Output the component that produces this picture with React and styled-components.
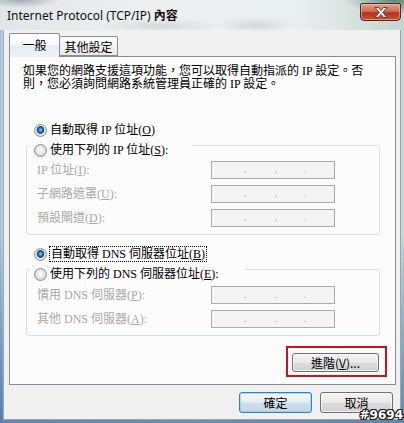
import React from 'react';
import styled, { createGlobalStyle } from 'styled-components';

const GlobalStyle = createGlobalStyle`
  html, body {
    margin: 0;
    padding: 0;
    background: #f0f0f0;
  }
  body {
    font-family: "Liberation Serif", "Noto Sans CJK TC", serif;
    font-size: 12px;
    color: #000;
  }
`;

const Window = styled.div`
  position: relative;
  width: 404px;
  height: 423px;
  display: flex;
  flex-direction: column;
  overflow: hidden;
  background:
    linear-gradient(180deg, rgba(255,255,255,0) 0, rgba(255,255,255,0) 55%, rgba(40,90,150,0.65) 100%),
    linear-gradient(90deg, #9fb8cc 0, #cbd9e4 3px, #e4e9ec 50%, #c9d6d2 100%);
`;

const TitleBar = styled.div`
  height: 30px;
  display: flex;
  align-items: flex-start;
  padding-left: 7px;
  background:
    radial-gradient(ellipse 40px 8px at 20px 0px, rgba(90,100,105,0.45), rgba(90,100,105,0) 100%),
    radial-gradient(ellipse 60px 8px at 160px 26px, rgba(140,150,155,0.25), rgba(140,150,155,0) 100%),
    radial-gradient(ellipse 40px 8px at 255px 25px, rgba(140,150,155,0.25), rgba(140,150,155,0) 100%),
    radial-gradient(ellipse 50px 14px at 395px 0px, rgba(60,110,95,0.75), rgba(60,110,95,0) 100%),
    linear-gradient(90deg, #e2e6e8 0, #edf0f1 40%, #e9eeee 75%, #c4d6cf 100%);
`;

const Title = styled.div`
  margin-top: 7px;
  font-family: "Noto Sans", "Noto Sans CJK TC", sans-serif;
  font-size: 12px;
  line-height: 16px;
  white-space: nowrap;
  color: #111;
`;

const TitleStrong = styled.b`
  font-family: "Noto Sans CJK TC", sans-serif;
`;

const CloseButton = styled.div`
  margin-left: auto;
  margin-top: 3px;
  margin-right: 3px;
  width: 41px;
  height: 18px;
  box-sizing: border-box;
  border: 1px solid #5b2418;
  border-radius: 2px 2px 4px 4px;
  display: flex;
  align-items: center;
  justify-content: center;
  background: linear-gradient(180deg, #e3a191 0, #cf6d57 45%, #b5321c 55%, #c9523a 100%);
  box-shadow: inset 0 0 0 1px rgba(255,220,210,0.45);
`;

const Client = styled.div`
  flex: 1;
  margin: 0 3px 3px 3px;
  border: 1px solid #97a6b1;
  border-top: none;
  background: #f0f0f0;
  display: flex;
  flex-direction: column;
`;

const TabRow = styled.div`
  margin-top: 3px;
  margin-left: 5px;
  height: 23px;
  display: flex;
  align-items: flex-end;
`;

const Tab = styled.div`
  box-sizing: border-box;
  width: ${p => p.$width}px;
  height: ${p => (p.$active ? 24 : 20)}px;
  margin-bottom: ${p => (p.$active ? -1 : 0)}px;
  position: relative;
  z-index: ${p => (p.$active ? 2 : 1)};
  border: 1px solid #898c95;
  border-bottom: ${p => (p.$active ? 'none' : '1px solid #898c95')};
  border-left: ${p => (p.$active ? '1px solid #898c95' : 'none')};
  border-radius: 2px 2px 0 0;
  background: ${p =>
    p.$active
      ? 'linear-gradient(180deg, #fdfdfd 0, #f7f9fb 45%, #e4ebf2 55%, #eef2f6 100%)'
      : 'linear-gradient(180deg, #fbfbfb 0, #f3f3f3 50%, #e8e8e8 100%)'};
  display: flex;
  justify-content: center;
  padding-top: ${p => (p.$active ? 3 : 2)}px;
  font-family: "Noto Sans CJK TC", sans-serif;
  font-size: 12px;
  line-height: 16px;
`;

const Panel = styled.div`
  box-sizing: border-box;
  margin-left: 5px;
  width: 387px;
  height: 329px;
  border: 1px solid #898c95;
  background: #fcfcfc;
  padding: 8px 0 0 13px;
  display: flex;
  flex-direction: column;
  align-items: flex-start;
`;

const Description = styled.div`
  line-height: 13px;
  white-space: nowrap;
`;

const RadioRow = styled.div`
  height: 16px;
  display: flex;
  align-items: center;
  gap: 3px;
  margin-top: ${p => p.$top || 0}px;
  margin-left: ${p => p.$left || 0}px;
  white-space: nowrap;
  line-height: 14px;
`;

const RadioCircle = styled.span`
  width: 13px;
  height: 13px;
  flex: none;
  box-sizing: border-box;
  border-radius: 50%;
  border: 1px solid #8e8f8f;
  background: ${p =>
    p.$checked
      ? 'radial-gradient(circle at 50% 45%, #9fd6f7 0, #3b8bcb 1.5px, #135596 3px, #1d4f80 3.6px, #f6f6f6 4.2px, #e6e6e6 5px, #d2d2d2 6px)'
      : 'radial-gradient(circle at 50% 45%, #ffffff 0, #eeeeee 3px, #d9d9d9 5px, #cfcfcf 6px)'};
`;

const FocusText = styled.span`
  outline: 1px dotted #000;
  outline-offset: 0;
  padding: 0 1px;
`;

const GroupBox = styled.div`
  box-sizing: border-box;
  width: 354px;
  margin-top: 7px;
  margin-left: 3px;
  border: 1px solid #d5dfe5;
  border-radius: 3px;
  padding: 0 0 7px 3px;
  display: flex;
  flex-direction: column;
  align-items: flex-start;
`;

const GroupHeader = styled.div`
  width: ${p => p.$width}px;
  height: 16px;
  margin-top: -4px;
  padding-left: 4px;
  box-sizing: border-box;
  background: #fcfcfc;
  display: flex;
  align-items: center;
  gap: 3px;
  white-space: nowrap;
  line-height: 14px;
`;

const FieldGrid = styled.div`
  margin-top: ${p => p.$top}px;
  padding-left: 7px;
  display: grid;
  grid-template-columns: 174px 124px;
  row-gap: 6px;
  align-items: center;
`;

const FieldLabel = styled.span`
  color: #a9a9a9;
  white-space: nowrap;
  line-height: 14px;
`;

const IpField = styled.div`
  box-sizing: border-box;
  width: 124px;
  height: 18px;
  border: 1px solid #ababab;
  background: #f4f4f4;
  display: grid;
  grid-template-columns: repeat(3, 1px);
  column-gap: 29px;
  padding: 10px 0 0 33px;
  align-content: start;
`;

const Dot = styled.span`
  width: 1px;
  height: 1px;
  background: #9a9a9a;
`;

const AdvancedRow = styled.div`
  align-self: stretch;
  display: flex;
  justify-content: flex-end;
  margin-top: 10px;
  padding-right: 8px;
`;

const Highlight = styled.div`
  border: 2px solid #c8141c;
  padding: 5px 6px 3px 4px;
`;

const Button = styled.div`
  box-sizing: border-box;
  width: ${p => p.$width}px;
  height: ${p => p.$height}px;
  border: 1px solid ${p => (p.$default ? '#3c7fb1' : '#707070')};
  border-radius: 3px;
  background: ${p =>
    p.$default
      ? 'linear-gradient(180deg, #f2f7fa 0, #e5eef5 48%, #cfe0ec 52%, #c3d7e6 100%)'
      : 'linear-gradient(180deg, #f2f2f2 0, #ebebeb 48%, #dddddd 52%, #cfcfcf 100%)'};
  box-shadow: inset 0 0 0 1px ${p => (p.$default ? 'rgba(140,210,245,0.7)' : 'rgba(255,255,255,0.7)')};
  display: flex;
  align-items: center;
  justify-content: center;
  font-family: "Noto Sans CJK TC", sans-serif;
  font-size: 12px;
  line-height: 14px;
  white-space: nowrap;
`;

const Footer = styled.div`
  margin-top: 7px;
  padding-right: 7px;
  display: flex;
  justify-content: flex-end;
  gap: 8px;
`;

const Watermark = styled.div`
  position: absolute;
  right: 1px;
  bottom: 0;
  font-family: "DejaVu Sans", sans-serif;
  font-weight: bold;
  font-size: 12px;
  line-height: 15px;
  color: #fff;
  text-shadow: -1px -1px 0 #222, 1px -1px 0 #222, -1px 1px 0 #222, 1px 1px 0 #222, 0 1px 0 #222, 0 -1px 0 #222, 1px 0 0 #222, -1px 0 0 #222;
`;

const Latin = styled.span`
  font-family: "Liberation Serif", serif;
`;

const ipRows = [
  { label: <>IP 位址(<u>I</u>):</> },
  { label: <>子網路遮罩(<u>U</u>):</> },
  { label: <>預設閘道(<u>D</u>):</> },
];

const dnsRows = [
  { label: <>慣用 <Latin>DNS</Latin> 伺服器(<u>P</u>):</> },
  { label: <>其他 <Latin>DNS</Latin> 伺服器(<u>A</u>):</> },
];

function Fields({ rows, top }) {
  return (
    <FieldGrid $top={top}>
      {rows.map((row, i) => (
        <React.Fragment key={i}>
          <FieldLabel>{row.label}</FieldLabel>
          <IpField>
            <Dot />
            <Dot />
            <Dot />
          </IpField>
        </React.Fragment>
      ))}
    </FieldGrid>
  );
}

export default function App() {
  return (
    <>
      <GlobalStyle />
      <Window>
        <TitleBar>
          <Title>
            Internet Protocol (TCP/IP) <TitleStrong>內容</TitleStrong>
          </Title>
          <CloseButton>
            <svg width="14" height="11" viewBox="0 0 14 11">
              <path
                d="M1 0.5 H4.5 L7 3.6 L9.5 0.5 H13 L8.8 5.5 L13 10.5 H9.5 L7 7.4 L4.5 10.5 H1 L5.2 5.5 Z"
                fill="#fff"
                stroke="#5a2016"
                strokeWidth="0.8"
              />
            </svg>
          </CloseButton>
        </TitleBar>
        <Client>
          <TabRow>
            <Tab $active $width={51}>一般</Tab>
            <Tab $width={58}>其他設定</Tab>
          </TabRow>
          <Panel>
            <Description>
              如果您的網路支援這項功能，您可以取得自動指派的 IP 設定。否
              <br />
              則，您必須詢問網路系統管理員正確的 IP 設定。
            </Description>

            <RadioRow $top={31} $left={11}>
              <RadioCircle $checked />
              <span>自動取得 IP 位址(<u>O</u>)</span>
            </RadioRow>

            <GroupBox>
              <GroupHeader $width={162}>
                <RadioCircle />
                <span>使用下列的 IP 位址(<u>S</u>):</span>
              </GroupHeader>
              <Fields rows={ipRows} top={3} />
            </GroupBox>

            <RadioRow $top={11} $left={11}>
              <RadioCircle $checked />
              <FocusText>自動取得 DNS 伺服器位址(<u>B</u>)</FocusText>
            </RadioRow>

            <GroupBox>
              <GroupHeader $width={215}>
                <RadioCircle />
                <span>使用下列的 DNS 伺服器位址(<u>E</u>):</span>
              </GroupHeader>
              <Fields rows={dnsRows} top={4} />
            </GroupBox>

            <AdvancedRow>
              <Highlight>
                <Button $width={87} $height={19}>進階(<u>V</u>)...</Button>
              </Highlight>
            </AdvancedRow>
          </Panel>
          <Footer>
            <Button $default $width={73} $height={21}>確定</Button>
            <Button $width={73} $height={21}>取消</Button>
          </Footer>
        </Client>
        <Watermark>#9694</Watermark>
      </Window>
    </>
  );
}
